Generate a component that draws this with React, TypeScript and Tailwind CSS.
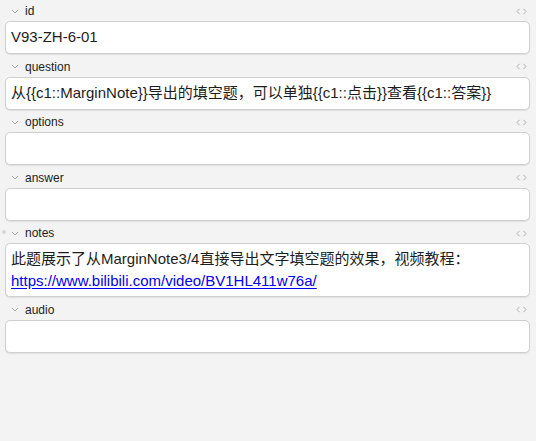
import React from "react";

/* ── Note fields ── */
interface Field {
  name: string;
  content?: React.ReactNode;
  dot?: boolean;
}

const fields: Field[] = [
  { name: "id", content: "V93-ZH-6-01" },
  {
    name: "question",
    content: "从{{c1::MarginNote}}导出的填空题，可以单独{{c1::点击}}查看{{c1::答案}}",
  },
  { name: "options" },
  { name: "answer" },
  {
    name: "notes",
    dot: true,
    content: (
      <>
        此题展示了从MarginNote3/4直接导出文字填空题的效果，视频教程：
        <br />
        <a href="#" className="text-[#0000ee] underline underline-offset-2">
          https://www.bilibili.com/video/BV1HL411w76a/
        </a>
      </>
    ),
  },
  { name: "audio" },
];

function Chevron() {
  return (
    <svg width="8" height="5" viewBox="0 0 8 5" className="shrink-0">
      <path d="M1 1l3 3 3-3" fill="none" stroke="#a8a8a8" strokeWidth="1" />
    </svg>
  );
}

function CodeToggle() {
  return (
    <svg width="11" height="7" viewBox="0 0 11 7">
      <path d="M3.5 0.8L1 3.5l2.5 2.7M7.5 0.8L10 3.5 7.5 6.2" fill="none" stroke="#b0b0b0" strokeWidth="1" />
    </svg>
  );
}

export default function App() {
  return (
    <div
      className="min-h-[441px] w-[536px] bg-[#f3f3f3] pl-[5px] pr-[6px] pt-px text-[#1d1d1d]"
      style={{ fontFamily: '"Liberation Sans", "Noto Sans CJK SC", sans-serif' }}
    >
      {fields.map((f) => (
        <div key={f.name} className="flex flex-col">
          {/* header */}
          <div className="relative flex h-[20px] items-center pl-[6px] pr-[3px]">
            {f.dot && (
              <span className="absolute -left-[3px] top-[7px] h-[4px] w-[4px] rounded-full bg-[#d6d6d6]" />
            )}
            <Chevron />
            <span className="ml-[6px] text-[12px] leading-none">{f.name}</span>
            <span className="ml-auto">
              <CodeToggle />
            </span>
          </div>
          {/* editor box */}
          <div className="mb-[2.5px] min-h-[33px] rounded-[5px] border border-[#cfcfcf] bg-white px-[5px] py-[4px] text-[15px] leading-[22px] shadow-[0_1px_1px_rgba(0,0,0,0.08)]">
            {f.content}
          </div>
        </div>
      ))}
    </div>
  );
}
